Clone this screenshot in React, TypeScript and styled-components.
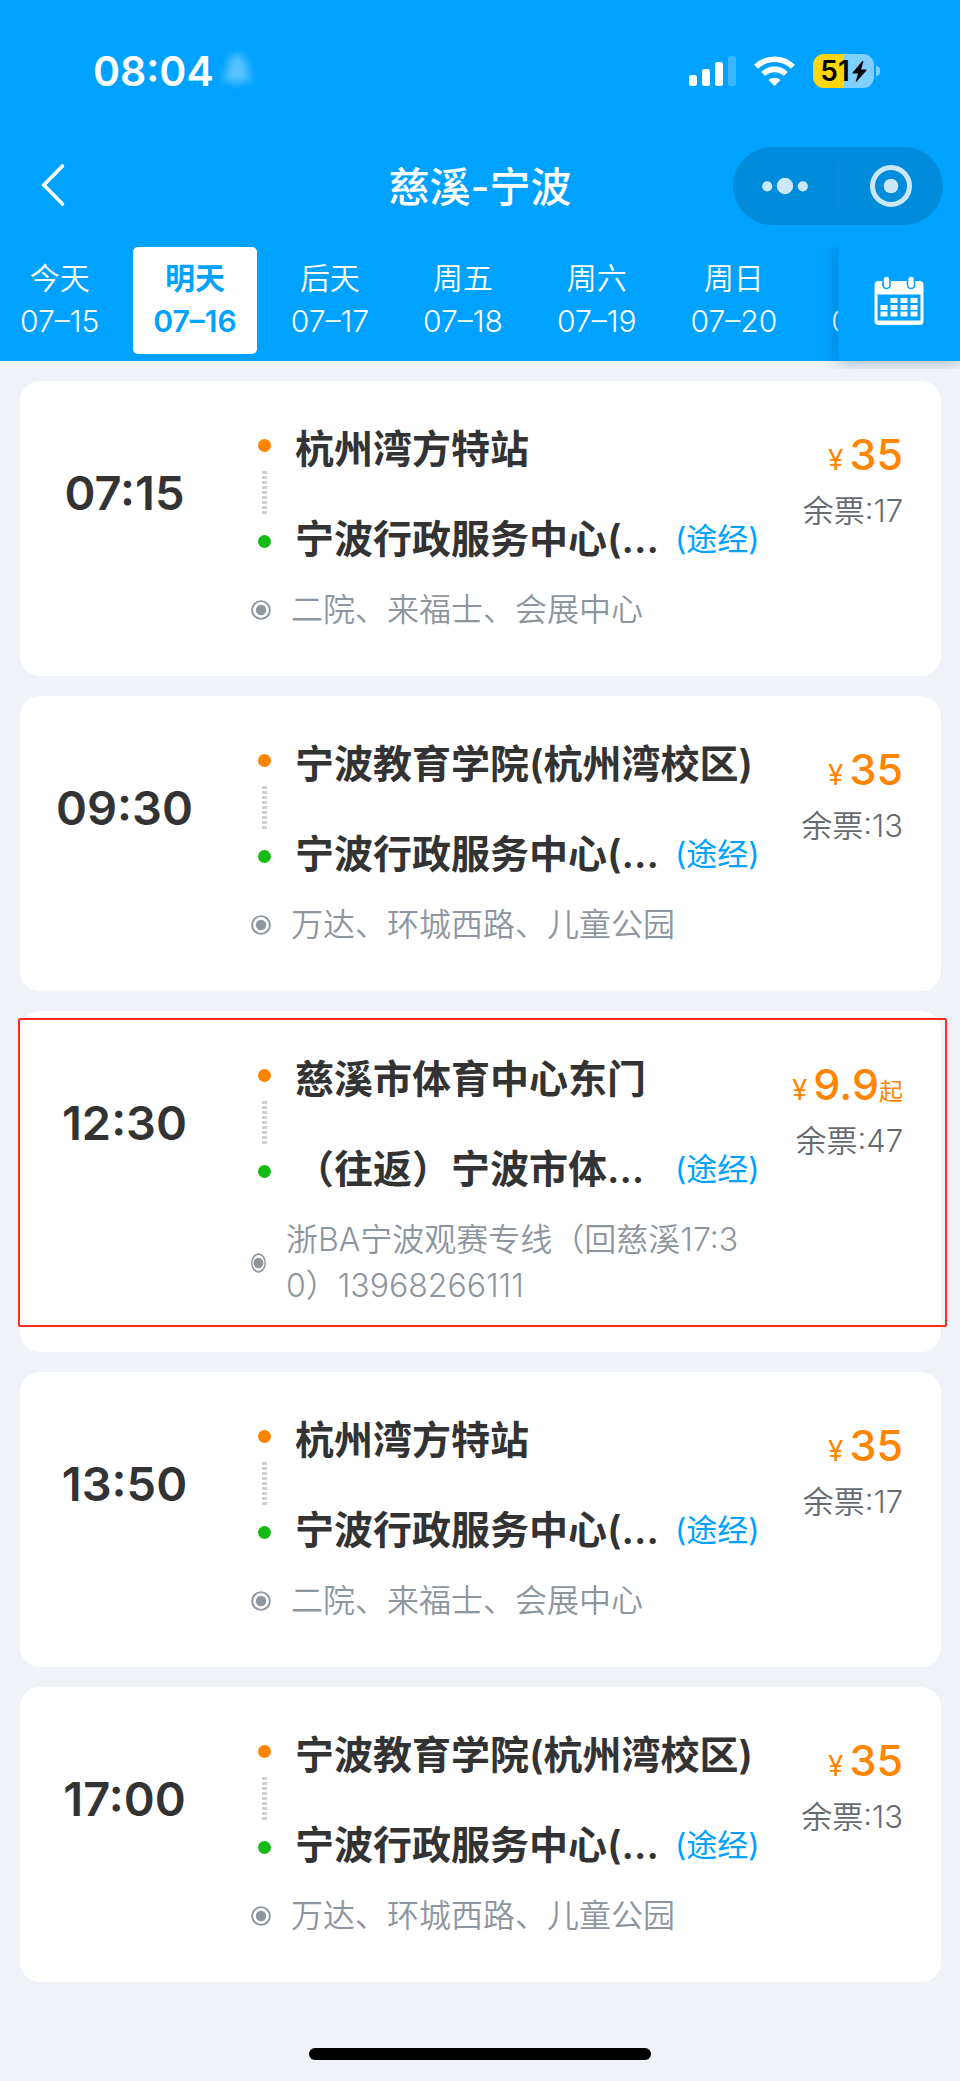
import React, { useState } from "react";
import styled, { createGlobalStyle } from "styled-components";

const BLUE = "#00a2ff";
const ORANGE = "#ff8400";
const GREEN = "#14bb14";
const GREY = "#8d959e";

const GlobalStyle = createGlobalStyle`
  *, *::before, *::after { box-sizing: border-box; }
  body {
    margin: 0;
    background: #eff3f7;
    color: #333333;
    font-family: "Inter", "Noto Sans CJK SC", sans-serif;
  }
  button {
    margin: 0;
    padding: 0;
    border: 0;
    background: none;
    color: inherit;
    font: inherit;
    cursor: pointer;
  }
  h1, h2, p, ul, ol { margin: 0; padding: 0; }
  ul, ol { list-style: none; }
  svg { display: block; }
`;

const Page = styled.div`
  display: flex;
  flex-direction: column;
  min-height: 100vh;
`;

const Header = styled.header`
  background: ${BLUE};
  color: #ffffff;
`;

const StatusBar = styled.div`
  display: flex;
  align-items: center;
  height: 142px;
  padding: 0 80px 0 93px;
`;

const Clock = styled.time`
  font-size: 41px;
  line-height: 48px;
  font-weight: 600;
`;

const SilentBell = styled.svg`
  margin-left: 5px;
  filter: blur(4px);
  opacity: 0.36;
`;

const StatusIcons = styled.div`
  display: flex;
  align-items: center;
  gap: 18px;
  margin-left: auto;
`;

const Battery = styled.div`
  display: flex;
  align-items: center;
  gap: 2px;
`;

const BatteryBody = styled.div`
  display: flex;
  align-items: center;
  justify-content: center;
  gap: 2px;
  width: 61px;
  height: 34px;
  border-radius: 11px;
  background: linear-gradient(90deg, #ffd60a 51%, #80d0ff 51%);
  color: #000000;
  font-size: 28px;
  line-height: 34px;
  font-weight: 600;
`;

const BatteryTip = styled.span`
  width: 4px;
  height: 10px;
  border-radius: 0 4px 4px 0;
  background: #80d0ff;
`;

const NavBar = styled.div`
  display: grid;
  grid-template-columns: 1fr auto 1fr;
  align-items: center;
  height: 88px;
  padding: 0 17px 0 40px;
`;

const NavStart = styled.div`
  margin-right: 23px;
  padding-top: 2px;
`;

const Title = styled.h1`
  margin-right: 23px;
  padding-top: 2px;
  font-size: 41px;
  line-height: 56px;
  font-weight: 500;
`;

const Capsule = styled.div`
  display: flex;
  align-items: center;
  justify-self: end;
  width: 210px;
  height: 78px;
  border-radius: 39px;
  background: #008bdb;
`;

const CapsuleButton = styled.button`
  display: flex;
  flex: 1;
  align-items: center;
  justify-content: center;
  height: 48px;

  & + & { border-left: 1px solid #0a93e2; }
`;

const DateBar = styled.nav`
  display: flex;
  height: 114px;
  margin-top: 17px;
`;

const DateList = styled.div`
  display: flex;
  flex: 1;
  align-items: flex-start;
  gap: 14px;
  min-width: 0;
  overflow: hidden;
`;

const DateTab = styled.button<{ $active: boolean }>`
  flex: none;
  height: 107px;
  padding: 10px 20px 11px;
  border-radius: 5px;
  background: ${(p) => (p.$active ? "#ffffff" : "transparent")};
  color: ${(p) => (p.$active ? BLUE : "#ffffff")};
  font-size: 30px;
  line-height: 43px;
  font-weight: ${(p) => (p.$active ? 600 : 350)};
  text-align: center;

  span { display: block; }
`;

const CalendarButton = styled.button`
  position: relative;
  display: flex;
  align-items: center;
  justify-content: center;
  width: 122px;
  padding-bottom: 7px;
  background: ${BLUE};
  box-shadow: 0 0 16px rgba(0, 70, 120, 0.4);
  clip-path: inset(0 0 -8px -20px);
`;

const TripList = styled.ul`
  display: flex;
  flex-direction: column;
  gap: 20px;
  padding: 20px 19px 20px 20px;
`;

const TripCard = styled.li`
  position: relative;
  display: grid;
  grid-template-columns: 209px minmax(0, 1fr) auto;
  padding: 44px 38px 43px 0;
  border-radius: 20px;
  background: #ffffff;
`;

const Highlight = styled.div`
  position: absolute;
  top: 7px;
  right: -6px;
  bottom: 25px;
  left: -2px;
  border: 2px solid #ff2d20;
  border-radius: 2px;
  pointer-events: none;
`;

const Departure = styled.time`
  padding-top: 38px;
  font-size: 47px;
  line-height: 60px;
  font-weight: 600;
  text-align: center;
`;

const Route = styled.div`
  padding-left: 22px;
`;

const Stops = styled.div`
  display: flex;
  gap: 24px;
`;

const Rail = styled.div`
  display: flex;
  flex-direction: column;
  align-items: center;
  width: 20px;
  padding: 14px 0 0 6px;
  gap: 19px;
`;

const Dot = styled.span<{ $color: string }>`
  width: 13px;
  height: 13px;
  border-radius: 50%;
  background: ${(p) => p.$color};
`;

const Dashes = styled.span`
  width: 5px;
  height: 45px;
  background: repeating-linear-gradient(#d0d0d0 0 3px, #ffffff 3px 5px);
`;

const StopNames = styled.div`
  display: flex;
  flex: 1;
  flex-direction: column;
  gap: 42px;
  min-width: 0;
`;

const StopRow = styled.div`
  display: flex;
  align-items: center;
  white-space: nowrap;
`;

const StopName = styled.h2<{ $fixed?: boolean }>`
  flex: none;
  width: ${(p) => (p.$fixed ? "380px" : "auto")};
  font-size: 39px;
  line-height: 48px;
  font-weight: 600;
`;

const PassBy = styled.span`
  color: ${BLUE};
  font-size: 31px;
  line-height: 40px;
`;

const Via = styled.div`
  display: flex;
  align-items: center;
  max-width: 498px;
  margin-top: 24px;
  gap: 20px;
  color: ${GREY};
`;

const ViaText = styled.p`
  flex: 1;
  font-size: 32px;
  line-height: 46px;
  font-weight: 350;
  word-break: break-all;
`;

const Fare = styled.div`
  padding-top: 3px;
  text-align: right;
`;

const Price = styled.p`
  color: ${ORANGE};
  font-size: 43px;
  line-height: 52px;
  font-weight: 500;

  small {
    font-weight: 400;
    line-height: 1;
  }
`;

const Currency = styled.small`
  margin-right: 6px;
  font-size: 28px;
`;

const PriceSuffix = styled.small`
  font-size: 24px;
`;

const Remaining = styled.p`
  margin-top: 8px;
  color: #666b70;
  font-size: 31px;
  line-height: 46px;
  font-weight: 350;
`;

const HomeIndicator = styled.div`
  width: 342px;
  height: 12px;
  margin: 46px auto 20px;
  border-radius: 6px;
  background: #000000;
`;

const SignalIcon = () => (
  <svg width="47" height="30" viewBox="0 0 47 30" fill="#fff" aria-hidden="true">
    <rect x="0" y="19" width="8" height="11" rx="2.5" />
    <rect x="13" y="13" width="8" height="17" rx="2.5" />
    <rect x="26" y="6" width="8" height="24" rx="2.5" />
    <rect x="39" y="0" width="8" height="30" rx="2.5" opacity="0.22" />
  </svg>
);

const WifiIcon = () => (
  <svg width="41" height="30" viewBox="0 0 41 30" aria-hidden="true">
    <g fill="none" stroke="#fff" strokeWidth="5.6">
      <path d="M2 10.8a26.3 26.3 0 0 1 37 0" />
      <path d="M9.2 18a16.2 16.2 0 0 1 22.6 0" />
    </g>
    <path d="M20.5 30 14.4 24.1a8.8 8.8 0 0 1 12.2 0Z" fill="#fff" />
  </svg>
);

const BoltIcon = () => (
  <svg width="15" height="21" viewBox="0 0 15 21" aria-hidden="true">
    <path d="M10.5 0 0.6 11.4c-.4.5-.1 1 .5 1H6L3.7 20.4c-.2.6.4.8.8.4L14.4 9.4c.4-.5.1-1-.5-1H9.2L11.3.5C11.4 0 10.9-.4 10.5 0Z" />
  </svg>
);

const BellIcon = () => (
  <SilentBell width="36" height="38" viewBox="0 0 36 38" aria-hidden="true">
    <path d="M18 2c-6 0-8 6-9 13-1 6-4 9-7 14h13c1 5 5 5 6 0h13c-4-5-5-8-6-14-1-7-4-13-10-13Z" fill="#fff" />
  </SilentBell>
);

const BackIcon = () => (
  <svg width="26" height="44" viewBox="0 0 26 44" aria-hidden="true">
    <path d="M22.5 3 3.8 22 22.5 41" fill="none" stroke="#fff" strokeWidth="3.6" strokeLinecap="round" />
  </svg>
);

const MoreIcon = () => (
  <svg width="46" height="18" viewBox="0 0 46 18" fill="#cce8f8" aria-hidden="true">
    <circle cx="5.2" cy="9.3" r="5.1" />
    <circle cx="23" cy="9" r="8.2" />
    <circle cx="40.8" cy="9.3" r="5.1" />
  </svg>
);

const CloseIcon = () => (
  <svg width="42" height="42" viewBox="0 0 42 42" aria-hidden="true">
    <circle cx="21" cy="21" r="18.5" fill="none" stroke="#cce8f8" strokeWidth="5" />
    <circle cx="21" cy="21" r="7.3" fill="#cce8f8" />
  </svg>
);

const CALENDAR_CELLS = [
  [17, 22], [27, 22], [37, 22],
  [7, 29], [17, 29], [27, 29], [37, 29],
  [7, 35.5], [17, 35.5], [27, 35.5], [37, 35.5],
];

const CalendarIcon = () => (
  <svg width="50" height="50" viewBox="0 0 50 50" aria-hidden="true">
    <rect x="0.5" y="5" width="49" height="44" rx="4" fill="#fff" />
    <rect x="3.5" y="18.5" width="43" height="26" fill={BLUE} />
    <rect x="9" y="0" width="7" height="12.5" rx="3.5" fill="#fff" stroke={BLUE} strokeWidth="1.6" />
    <rect x="33.5" y="0" width="7" height="12.5" rx="3.5" fill="#fff" stroke={BLUE} strokeWidth="1.6" />
    {CALENDAR_CELLS.map(([x, y]) => (
      <rect key={`${x}-${y}`} x={x - 0.5} y={y} width="7" height="5" fill="#fff" />
    ))}
  </svg>
);

const ViaIcon = ({ narrow }: { narrow?: boolean }) => (
  <svg
    width={narrow ? 15 : 20}
    height="20"
    viewBox="0 0 20 20"
    preserveAspectRatio="none"
    aria-hidden="true"
  >
    <circle cx="10" cy="10" r="8.9" fill="none" stroke={GREY} strokeWidth="1.9" />
    <ellipse cx="10" cy="10" rx={narrow ? 6.6 : 5.2} ry="5.2" fill={GREY} />
  </svg>
);

const DATES = [
  ["今天", "07–15"],
  ["明天", "07–16"],
  ["后天", "07–17"],
  ["周五", "07–18"],
  ["周六", "07–19"],
  ["周日", "07–20"],
  ["周一", "07–21"],
];

interface Trip {
  time: string;
  from: string;
  to: string;
  via: string;
  price: string;
  startingAt?: boolean;
  left: number;
  highlighted?: boolean;
}

const TRIPS: Trip[] = [
  { time: "07:15", from: "杭州湾方特站", to: "宁波行政服务中心(...", via: "二院、来福士、会展中心", price: "35", left: 17 },
  { time: "09:30", from: "宁波教育学院(杭州湾校区)", to: "宁波行政服务中心(...", via: "万达、环城西路、儿童公园", price: "35", left: 13 },
  {
    time: "12:30",
    from: "慈溪市体育中心东门",
    to: "（往返）宁波市体...",
    via: "浙BA宁波观赛专线（回慈溪17:30）13968266111",
    price: "9.9",
    startingAt: true,
    left: 47,
    highlighted: true,
  },
  { time: "13:50", from: "杭州湾方特站", to: "宁波行政服务中心(...", via: "二院、来福士、会展中心", price: "35", left: 17 },
  { time: "17:00", from: "宁波教育学院(杭州湾校区)", to: "宁波行政服务中心(...", via: "万达、环城西路、儿童公园", price: "35", left: 13 },
];

const TripItem = ({ trip }: { trip: Trip }) => (
  <TripCard>
    <Departure>{trip.time}</Departure>
    <Route>
      <Stops>
        <Rail>
          <Dot $color={ORANGE} />
          <Dashes />
          <Dot $color={GREEN} />
        </Rail>
        <StopNames>
          <StopRow>
            <StopName>{trip.from}</StopName>
          </StopRow>
          <StopRow>
            <StopName $fixed>{trip.to}</StopName>
            <PassBy>(途经)</PassBy>
          </StopRow>
        </StopNames>
      </Stops>
      <Via>
        <ViaIcon narrow={trip.highlighted} />
        <ViaText>{trip.via}</ViaText>
      </Via>
    </Route>
    <Fare>
      <Price>
        <Currency>¥</Currency>
        {trip.price}
        {trip.startingAt && <PriceSuffix>起</PriceSuffix>}
      </Price>
      <Remaining>余票:{trip.left}</Remaining>
    </Fare>
    {trip.highlighted && <Highlight />}
  </TripCard>
);

export default function App() {
  const [selected, setSelected] = useState("07–16");

  return (
    <Page>
      <GlobalStyle />
      <Header>
        <StatusBar>
          <Clock>08:04</Clock>
          <BellIcon />
          <StatusIcons>
            <SignalIcon />
            <WifiIcon />
            <Battery>
              <BatteryBody>
                51
                <BoltIcon />
              </BatteryBody>
              <BatteryTip />
            </Battery>
          </StatusIcons>
        </StatusBar>
        <NavBar>
          <NavStart>
            <button type="button" aria-label="返回">
              <BackIcon />
            </button>
          </NavStart>
          <Title>慈溪-宁波</Title>
          <Capsule>
            <CapsuleButton type="button" aria-label="更多">
              <MoreIcon />
            </CapsuleButton>
            <CapsuleButton type="button" aria-label="关闭">
              <CloseIcon />
            </CapsuleButton>
          </Capsule>
        </NavBar>
        <DateBar>
          <DateList>
            {DATES.map(([day, date]) => (
              <DateTab
                key={date}
                type="button"
                $active={date === selected}
                aria-pressed={date === selected}
                onClick={() => setSelected(date)}
              >
                <span>{day}</span>
                <span>{date}</span>
              </DateTab>
            ))}
          </DateList>
          <CalendarButton type="button" aria-label="选择日期">
            <CalendarIcon />
          </CalendarButton>
        </DateBar>
      </Header>
      <main>
        <TripList>
          {TRIPS.map((trip) => (
            <TripItem key={trip.time} trip={trip} />
          ))}
        </TripList>
      </main>
      <HomeIndicator />
    </Page>
  );
}
